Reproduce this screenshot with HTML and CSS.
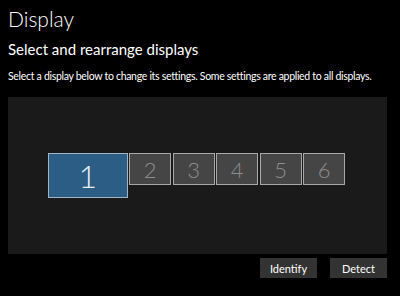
FILE: index.html
```html
<!DOCTYPE html>
<html lang="en">
<head>
  <meta charset="UTF-8" />
  <title>Display</title>
  <link rel="stylesheet" href="styles.css">
</head>
<body>
  <div class="page">
    <h1>Display</h1>
    <h2>Select and rearrange displays</h2>
    <p class="hint">Select a display below to change its settings. Some settings are applied to all displays.</p>

    <div class="canvas">
      <div class="monitors">
        <div class="monitor main">1</div>
        <div class="monitor">2</div>
        <div class="monitor">3</div>
        <div class="monitor">4</div>
        <div class="monitor">5</div>
        <div class="monitor">6</div>
      </div>
    </div>

    <div class="actions">
      <button>Identify</button>
      <button>Detect</button>
    </div>
  </div>
</body>
</html>
```

FILE: styles.css
```css
body {
  margin: 0;
  background: #000;
  color: #fff;
  font-family: Lato, "Open Sans", sans-serif;
}

.page {
  padding: 6px 13px 0 8px;
}

h1 {
  margin: 0;
  font-size: 21px;
  font-weight: 300;
  line-height: 26px;
}

h2 {
  margin: 7px 0 0;
  font-size: 15px;
  font-weight: 400;
  line-height: 20px;
}

.hint {
  margin: 9px 0 0;
  font-size: 10.5px;
  letter-spacing: -0.3px;
  line-height: 16px;
  white-space: nowrap;
}

.canvas {
  margin-top: 13px;
  height: 157px;
  background: #1a1a1a;
  display: flex;
  justify-content: center;
  align-items: flex-start;
}

.monitors {
  display: flex;
  align-items: flex-start;
  gap: 1.5px;
  margin-top: 56px;
  margin-left: -2px;
}

.monitor {
  box-sizing: border-box;
  width: 42px;
  height: 32px;
  background: #454545;
  border: 1.5px solid #a8a8a8;
  color: #8e8e8e;
  font-size: 22px;
  font-weight: 300;
  display: flex;
  align-items: center;
  justify-content: center;
}

.monitor.main {
  width: 80px;
  height: 45px;
  background: #2b5d85;
  border-color: #9fb4c4;
  color: #e8eef3;
  font-size: 32px;
}

.actions {
  display: flex;
  justify-content: flex-end;
  gap: 13px;
  margin-top: 4px;
}

.actions button {
  width: 57px;
  height: 20px;
  border: none;
  background: #333;
  color: #fff;
  font-family: inherit;
  font-size: 11px;
  padding: 0;
}
```
